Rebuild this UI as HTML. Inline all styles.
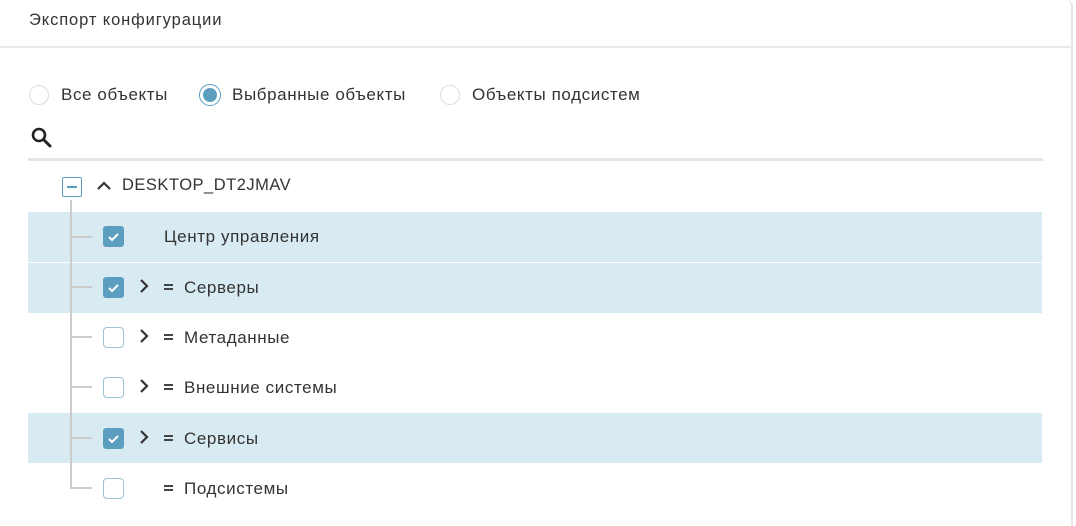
<!DOCTYPE html><html><head><meta charset="utf-8"><style>
body{margin:0;width:1076px;height:526px;background:#fff;font-family:"Liberation Sans",sans-serif;color:#333;position:relative;overflow:hidden}
.a{position:absolute}
.t{font-size:17px;color:#333;white-space:nowrap;letter-spacing:0.6px}
.row{position:absolute;left:28px;width:1014px;height:50px}
.hl{background:#d9ebf2}
.cb{position:absolute;left:103px;width:21px;height:21px;border-radius:3px;box-sizing:border-box}
.on{background:#5c9ebf}
.off{border:1px solid #9cc2d5;background:#fff;border-radius:4px}
.h{position:absolute;left:71px;width:21px;height:2px;background:#ccc}
</style></head><body>
<div class="a" style="left:0;top:0;width:1073px;height:526px;border-right:2px solid #e6e6e6;border-top-right-radius:6px;box-sizing:border-box"></div>
<div class="a t" style="left:29px;top:11px;font-size:16.5px;letter-spacing:0.9px">Экспорт конфигурации</div>
<div class="a" style="left:0;top:46px;width:1073px;height:2px;background:#eaeaea"></div>

<div class="a" style="left:29px;top:85px;width:20px;height:20px;border:1px solid #ddd;border-radius:50%;box-sizing:border-box"></div>
<div class="a t" style="left:61px;top:85px">Все объекты</div>
<div class="a" style="left:199px;top:84px;width:22px;height:22px;border:1px solid #5c9ebf;border-radius:50%;box-sizing:border-box"></div>
<div class="a" style="left:203px;top:88px;width:14px;height:14px;background:#5c9ebf;border-radius:50%"></div>
<div class="a t" style="left:232px;top:85px">Выбранные объекты</div>
<div class="a" style="left:440px;top:85px;width:20px;height:20px;border:1px solid #ddd;border-radius:50%;box-sizing:border-box"></div>
<div class="a t" style="left:472px;top:85px">Объекты подсистем</div>

<svg class="a" style="left:30px;top:126px" width="24" height="24"><circle cx="9" cy="9" r="6" fill="none" stroke="#222" stroke-width="2.6"/><line x1="13.5" y1="13.5" x2="20" y2="20" stroke="#222" stroke-width="3" stroke-linecap="round"/></svg>
<div class="a" style="left:28px;top:158px;width:1015px;height:3px;background:#e4e4e4"></div>

<div class="a" style="left:62px;top:177px;width:20px;height:20px;border:1px solid #5c9ebf;border-radius:2px;box-sizing:border-box"></div>
<div class="a" style="left:67px;top:186px;width:10px;height:1.5px;background:#5c9ebf"></div>
<svg class="a" style="left:95px;top:179px" width="18" height="14"><path d="M3 10 L9 4 L15 10" fill="none" stroke="#333" stroke-width="2.2"/></svg>
<div class="a t" style="left:122px;top:176px;font-size:16.5px;letter-spacing:0.5px">DESKTOP_DT2JMAV</div>

<div class="row hl" style="top:212px"></div>
<div class="row hl" style="top:263px"></div>
<div class="row hl" style="top:413px"></div>
<div class="a" style="left:70px;top:200px;width:2px;height:289px;background:#ccc"></div>

<div class="h" style="top:236px"></div><div class="cb on" style="top:226px"></div>
<div class="a t" style="left:164px;top:227px">Центр управления</div>

<div class="h" style="top:286px"></div><div class="cb on" style="top:277px"></div>
<div class="a t" style="left:184px;top:278px">Серверы</div>
<div class="h" style="top:336px"></div><div class="cb off" style="top:327px"></div>
<div class="a t" style="left:184px;top:328px">Метаданные</div>
<div class="h" style="top:386px"></div><div class="cb off" style="top:377px"></div>
<div class="a t" style="left:184px;top:378px">Внешние системы</div>
<div class="h" style="top:437px"></div><div class="cb on" style="top:428px"></div>
<div class="a t" style="left:184px;top:429px">Сервисы</div>
<div class="h" style="top:487px"></div><div class="cb off" style="top:478px"></div>
<div class="a t" style="left:184px;top:479px">Подсистемы</div>

<svg class="a" style="left:0;top:0" width="1076" height="526">
<g fill="none" stroke="#fff" stroke-width="2"><path d="M109 237 l3 3 l6 -6"/><path d="M109 288 l3 3 l6 -6"/><path d="M109 439 l3 3 l6 -6"/></g>
<g fill="none" stroke="#333" stroke-width="2.2"><path d="M141 280 l6 6 l-6 6"/><path d="M141 330 l6 6 l-6 6"/><path d="M141 380 l6 6 l-6 6"/><path d="M141 431 l6 6 l-6 6"/></g>
<g fill="#444"><rect x="164" y="284" width="9" height="2"/><rect x="164" y="288" width="9" height="2"/><rect x="164" y="334" width="9" height="2"/><rect x="164" y="338" width="9" height="2"/><rect x="164" y="384" width="9" height="2"/><rect x="164" y="388" width="9" height="2"/><rect x="164" y="435" width="9" height="2"/><rect x="164" y="439" width="9" height="2"/><rect x="164" y="485" width="9" height="2"/><rect x="164" y="489" width="9" height="2"/></g>
</svg>
</body></html>
